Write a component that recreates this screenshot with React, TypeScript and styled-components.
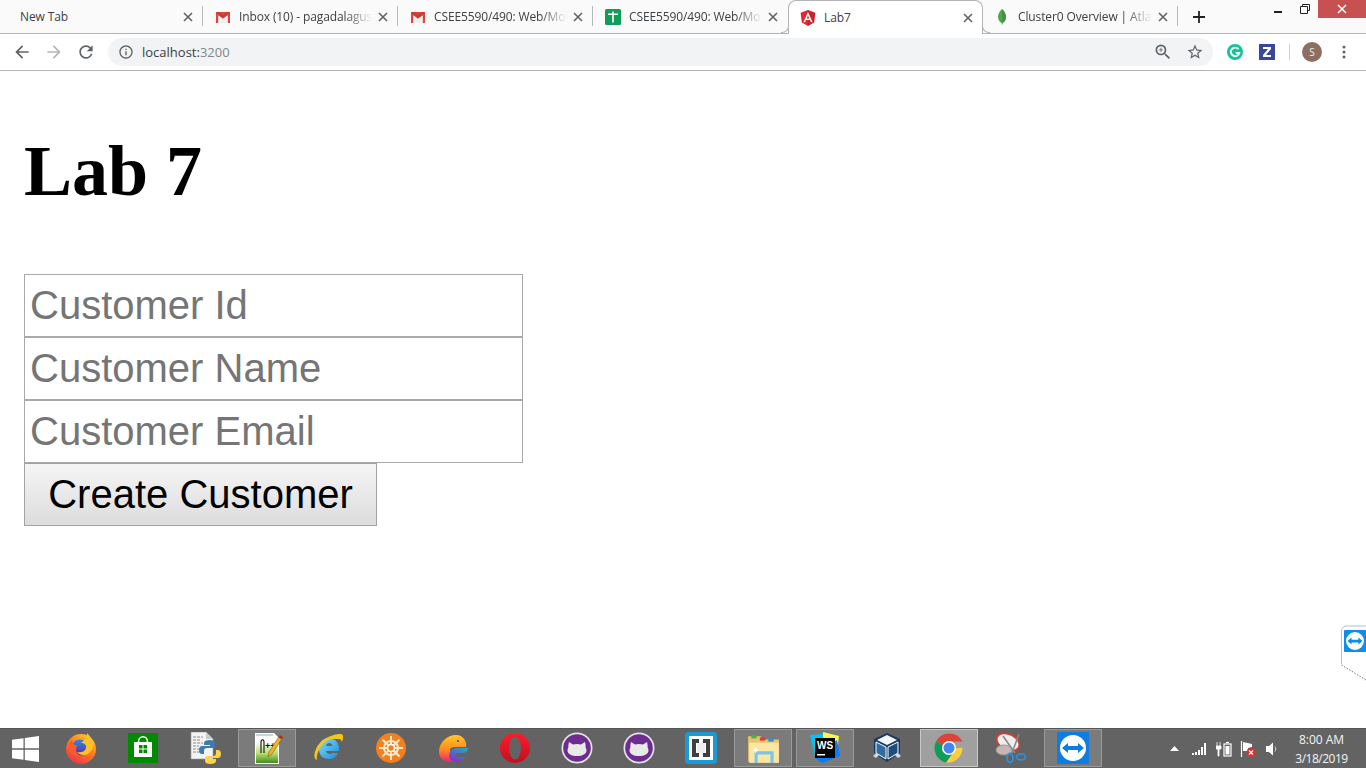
import React from 'react';
import styled, { createGlobalStyle } from 'styled-components';

const Global = createGlobalStyle`
  html, body { margin: 0; padding: 0; height: 100%; overflow: hidden; background: #fff; }
  * { box-sizing: border-box; }
`;

const Screen = styled.div`
  width: 1366px; height: 768px; display: flex; flex-direction: column; position: relative; overflow: hidden;
  font-family: "Open Sans", "Noto Sans", sans-serif;
`;
const TabStrip = styled.div`
  height: 34px; flex: none; display: flex; align-items: stretch; padding-left: 8px;
  background: #fafafa; border-bottom: 1px solid #b4b4b4;
`;
const Tab = styled.div<{ $active?: boolean; $afterActive?: boolean }>`
  width: ${p => (p.$active ? 195 : 194)}px; flex: none; display: flex; align-items: center; gap: 8px;
  padding: 0 9px 0 ${p => (p.$active || p.$afterActive ? 11 : 12)}px; position: relative;
  height: ${p => (p.$active ? 34 : 33)}px;
  background: ${p => (p.$active ? '#fff' : 'transparent')};
  ${p => p.$active ? `
    border: 1px solid #b4b4b4; border-bottom: 0; border-radius: 8px 8px 0 0;
    &::before, &::after { content: ''; position: absolute; bottom: 1px; width: 7px; height: 7px; background: #fafafa; border-bottom: 1px solid #b4b4b4; }
    &::before { left: -8px; border-right: 1px solid #b4b4b4; border-bottom-right-radius: 7px; }
    &::after { right: -8px; border-left: 1px solid #b4b4b4; border-bottom-left-radius: 7px; }
  ` : ''}
`;
const TabTitle = styled.span<{ $fade?: boolean }>`
  flex: 1; min-width: 0; white-space: nowrap; overflow: hidden; font-size: 12px; line-height: 16px;
  color: #3c4043; letter-spacing: -0.12px; margin-right: -2px;
  ${p => p.$fade ? `-webkit-mask-image: linear-gradient(to right, #000 80%, transparent 100%); mask-image: linear-gradient(to right, #000 80%, transparent 100%);` : ''}
`;
const TabClose = styled.svg`
  width: 10px; height: 10px; flex: none; stroke: #5f6368; stroke-width: 1.6; fill: none;
`;
const TabDivider = styled.div<{ $hidden?: boolean }>`
  width: 1px; flex: none; height: 20px; align-self: center; margin-top: -1px;
  background: ${p => (p.$hidden ? 'transparent' : '#b8b8b8')};
`;
const NewTab = styled.svg`
  width: 12px; height: 12px; flex: none; align-self: center; margin-left: 15px; stroke: #222; stroke-width: 1.8; fill: none;
`;
const WindowControls = styled.div`
  margin-left: auto; display: flex; align-items: flex-start; height: 18px;
`;
const WinButton = styled.div<{ $close?: boolean }>`
  width: ${p => (p.$close ? 48 : 26.5)}px; height: 18px; display: flex; align-items: center; justify-content: center;
  background: ${p => (p.$close ? '#c75050' : 'transparent')};
`;
const Toolbar = styled.div`
  height: 37px; flex: none; display: flex; align-items: center; padding: 0 6px; background: #fff;
  border-bottom: 1px solid #b4b4b4;
`;
const ToolButton = styled.div`
  width: 32px; height: 32px; flex: none; display: flex; align-items: center; justify-content: center;
`;
const Omnibox = styled.div`
  flex: 1; height: 28px; margin: 0 6px; background: #f1f3f4; border-radius: 14px; display: flex; align-items: center;
  padding: 0 2px 0 10px; font-size: 13px; min-width: 0;
`;
const UrlHost = styled.span`
  color: #3c4043; margin-left: 8px;
`;
const UrlPort = styled.span`
  color: #80868b; flex: 1;
`;
const ToolDivider = styled.div`
  width: 1px; height: 16px; background: #d0d0d0; margin: 0 6px;
`;
const Avatar = styled.div`
  width: 20px; height: 20px; border-radius: 50%; background: #8d6e63; color: #eee; font-size: 10px;
  display: flex; align-items: center; justify-content: center;
`;
const Page = styled.main`
  flex: 1; padding: 0 24px; min-height: 0;
`;
const Heading = styled.h1`
  margin: 60px 0 63px; font: bold 72px/80px "Liberation Serif", "Times New Roman", serif; color: #000;
`;
const Form = styled.form`
  display: flex; flex-direction: column; align-items: flex-start;
`;
const Field = styled.input`
  width: 499px; height: 63px; padding: 0 5px; border: 1px solid #a9a9a9; border-radius: 0; outline: none; background: #fff;
  font: 40px "Liberation Sans", Arial, sans-serif;
  &::placeholder { color: #757575; opacity: 1; }
`;
const Submit = styled.button`
  width: 353px; height: 63px; padding: 0; border: 1px solid #a3a3a3; border-radius: 0;
  background: linear-gradient(#f5f5f5, #dcdcdc); color: #000;
  font: 40px "Liberation Sans", Arial, sans-serif;
`;
const SideWidget = styled.svg`
  position: absolute; right: 0; top: 625px; width: 26px; height: 56px;
`;
const Taskbar = styled.footer`
  height: 40px; flex: none; display: flex; align-items: stretch; background: #636363; border-top: 1px solid #555;
  color: #fff;
`;
const StartButton = styled.div`
  width: 50px; flex: none; display: flex; align-items: center; justify-content: center;
`;
const TaskItem = styled.div<{ $state?: 'open' | 'focus' }>`
  width: 58px; margin: 0 2px 1px; flex: none; display: flex; align-items: center; justify-content: center;
  border: ${p => (p.$state ? '1px solid' : '0')};
  border-color: ${p => (p.$state === 'focus' ? '#c8c8c8' : '#9a9a9a')};
  background: ${p => (p.$state === 'focus' ? '#a0a0a0' : p.$state === 'open' ? '#7b7b7b' : 'transparent')};
`;
const Tray = styled.div`
  margin-left: auto; display: flex; align-items: center;
`;
const TrayIcon = styled.div<{ $gap?: number }>`
  width: 24px; display: flex; align-items: center; justify-content: center;
  margin-right: ${p => p.$gap ?? 0}px;
`;
const Clock = styled.div`
  width: 82px; padding-right: 7px; text-align: center; font-size: 12px; line-height: 19px; color: #f4f4f4;
`;
const ClockDate = styled.div`
  letter-spacing: -0.5px;
`;

const x = <TabClose viewBox="0 0 10 10"><path d="M1 1l8 8M9 1l-8 8" /></TabClose>;

const Gmail = () => (
  <svg width="16" height="16" viewBox="0 0 16 16">
    <path d="M1 3h14v11h-2.4V6.6L8 10 3.4 6.6V14H1z" fill="#d8453a" />
    <path d="M3.4 14V6.6L8 10l4.6-3.4V14z" fill="#efefef" />
    <path d="M1 3l7 5.4L15 3h-2L8 6.6 3 3z" fill="#c5392f" />
  </svg>
);
const Sheets = () => (
  <svg width="16" height="16" viewBox="0 0 16 16">
    <rect width="16" height="16" rx="1.5" fill="#0f9d58" />
    <path d="M7.200 2.500h1.600v2H13v1.600H8.800v7.400H7.200V6.100H3V4.500h4.200z" fill="#fff" />
  </svg>
);
const Angular = () => (
  <svg width="16" height="16" viewBox="0 0 16 16">
    <path d="M8 0L.6 2.7l1.2 9.7L8 16z" fill="#e0282f" />
    <path d="M8 0l7.4 2.7-1.2 9.7L8 16z" fill="#c4242b" />
    <path d="M8 2L3.4 12.3h1.7l.9-2.3h4l.9 2.3h1.7zm1.3 6.6H6.7L8 5.5z" fill="#fff" />
  </svg>
);
const Leaf = () => (
  <svg width="16" height="16" viewBox="0 0 16 16">
    <path d="M8 0c2 2 4 4.500 4 8s-2.500 5.500-3.500 6l-.5 2-.5-2C6.500 13.500 4 11.500 4 8s2-6 4-8z" fill="#4fa84a" />
    <path d="M8 0c2 2 4 4.500 4 8s-2.500 5.500-3.500 6L8 16z" fill="#3f9440" />
  </svg>
);

const M = ({ d, c = '#5f6368', s = 20 }: { d: string; c?: string; s?: number }) => (
  <svg width={s} height={s} viewBox="0 0 24 24" fill={c}><path d={d} /></svg>
);
const BACK = 'M20 11H7.83l5.59-5.59L12 4l-8 8 8 8 1.41-1.41L7.83 13H20v-2z';
const FWD = 'M4 13h12.17l-5.59 5.590L12 20l8-8-8-8-1.410 1.410L16.170 11H4v2z';
const RELOAD = 'M17.65 6.35A7.958 7.958 0 0 0 12 4c-4.42 0-7.99 3.58-7.99 8s3.57 8 7.99 8c3.73 0 6.84-2.55 7.73-6h-2.08A5.99 5.99 0 0 1 12 18c-3.31 0-6-2.69-6-6s2.69-6 6-6c1.66 0 3.14.69 4.22 1.78L13 11h7V4l-2.35 2.35z';
const INFO = 'M11 7h2v2h-2zm0 4h2v6h-2zm1-9C6.48 2 2 6.48 2 12s4.48 10 10 10 10-4.48 10-10S17.52 2 12 2zm0 18c-4.41 0-8-3.59-8-8s3.59-8 8-8 8 3.59 8 8-3.59 8-8 8z';
const STAR = 'M22 9.24l-7.19-.62L12 2 9.19 8.63 2 9.24l5.46 4.73L5.82 21 12 17.27 18.18 21l-1.63-7.03L22 9.24zM12 15.4l-3.76 2.27 1-4.28-3.32-2.88 4.38-.38L12 6.1l1.71 4.04 4.38.38-3.32 2.88 1 4.28L12 15.4z';
const ZOOM = 'M15.5 14h-.79l-.28-.27A6.471 6.471 0 0 0 16 9.5 6.5 6.5 0 1 0 9.5 16c1.61 0 3.09-.59 4.23-1.57l.27.28v.79l5 4.99L20.49 19l-4.99-5zm-6 0C7.01 14 5 11.99 5 9.5S7.01 5 9.5 5 14 7.01 14 9.5 11.99 14 9.5 14zM12 10h-2v2H9v-2H7V9h2V7h1v2h2v1z';

const Grammarly = () => (
  <svg width="16" height="16" viewBox="0 0 16 16">
    <circle cx="8" cy="8" r="8" fill="#15c39a" />
    <path d="M11.500 5.200A4.300 4.300 0 1 0 12.300 9H8.800" fill="none" stroke="#fff" strokeWidth="1.900" />
  </svg>
);
const ZExt = () => (
  <svg width="16" height="16" viewBox="0 0 16 16">
    <rect width="16" height="16" fill="#36479c" />
    <path d="M4 3h8v2l-5 6h5v2H4v-2l5-6H4z" fill="#fff" />
  </svg>
);
const Dots = () => (
  <svg width="4" height="14" viewBox="0 0 4 14" fill="#5f6368">
    <circle cx="2" cy="2" r="1.500" /><circle cx="2" cy="7" r="1.500" /><circle cx="2" cy="12" r="1.500" />
  </svg>
);

const Ico = ({ children, s = 32 }: { children: React.ReactNode; s?: number }) => (
  <svg width={s} height={s} viewBox="0 0 32 32">{children}</svg>
);

const WinLogo = () => (
  <svg width="27" height="26" viewBox="0 0 27 26" fill="#fff">
    <path d="M0 3.800L11.500 2.200V12.300H0zM12.800 2L27 0V12.300H12.800zM0 13.700H11.500V23.800L0 22.200zM12.800 13.700H27V26L12.800 24z" />
  </svg>
);
const Firefox = () => (
  <Ico>
    <defs>
      <linearGradient id="ff" x1="0.800" y1="0" x2="0.200" y2="1"><stop offset="0" stopColor="#ffcb2e" /><stop offset=".45" stopColor="#ff7a1f" /><stop offset="1" stopColor="#e8304f" /></linearGradient>
      <linearGradient id="ffc" x1="0.500" y1="0" x2="0.500" y2="1"><stop offset="0" stopColor="#2a8ae8" /><stop offset="1" stopColor="#5a2aa0" /></linearGradient>
    </defs>
    <circle cx="16" cy="17" r="15" fill="url(#ff)" />
    <circle cx="15" cy="15.500" r="8" fill="url(#ffc)" />
    <path d="M22 1c3 3 5 6 6 9 1 4-1 9-5 12-4 2-9 1-11-2 4 1 8 0 9-4 1-3-2-5-5-5 3-3 6-5 6-10z" fill="#ffc02a" />
    <path d="M7 8c1 4 2 6 6 5-3 3-3 9 3 11-6 1-11-3-12-8 0-3 1-6 3-8z" fill="#ff5a2a" />
  </Ico>
);
const Store = () => (
  <Ico>
    <rect x="1" y="1" width="30" height="30" fill="#008a00" />
    <path d="M7 10h18v15H7z" fill="#fff" />
    <path d="M11.500 10c0-7 9-7 9 0" fill="none" stroke="#fff" strokeWidth="1.600" />
    <path d="M12 13h3.500v3.500H12zM16.500 13H20v3.500h-3.500zM12 17.500h3.500V21H12zM16.500 17.500H20V21h-3.500z" fill="#008a00" />
  </Ico>
);
const PyDoc = () => (
  <Ico>
    <path d="M2 0h15l7 7v20H2z" fill="#f3f3f3" stroke="#999" strokeWidth=".6" />
    <path d="M17 0l7 7h-7z" fill="#c9c9c9" />
    <path d="M4 5h10M4 8h8M4 11h10M4 14h6M4 17h8M4 20h7" stroke="#8a8a8a" strokeWidth="1" strokeDasharray="3 1" />
    <path d="M21 8c-4 0-6 1-6 3v2h6v1h-8c-2 0-3 2-3 4s1 4 3 4h2v-3c0-2 1-3 3-3h5c2 0 3-1 3-3v-2c0-2-2-3-5-3z" fill="#3f7cac" />
    <path d="M21 32c4 0 6-1 6-3v-2h-6v-1h8c2 0 3-2 3-4s-1-4-3-4h-2v3c0 2-1 3-3 3h-5c-2 0-3 1-3 3v2c0 2 2 3 5 3z" fill="#ffd343" />
  </Ico>
);
const NotepadPP = () => (
  <Ico>
    <defs>
      <linearGradient id="np" x1="0" y1="0" x2="0" y2="1"><stop offset="0" stopColor="#ffffff" /><stop offset=".55" stopColor="#b6dc6a" /><stop offset="1" stopColor="#3f8f1f" /></linearGradient>
    </defs>
    <path d="M4 1h19l5 5v26H4z" fill="#fff" />
    <path d="M5 10h22v21H5z" fill="url(#np)" />
    <path d="M5 2h17v2H5z" fill="#9bc" opacity=".6" />
    <path d="M10 21V10c0-3 3-3 3 0v11" fill="none" stroke="#111" strokeWidth="1.100" />
    <text x="14" y="17" fontSize="9" fontFamily="Liberation Sans" fontWeight="bold" fill="#111">++</text>
    <path d="M29 3l3 2-11 17-4 3 1-5z" fill="#f0b429" stroke="#7a5a10" strokeWidth=".6" />
    <path d="M29 3l3 2-1.500 2.500-3-2z" fill="#a33" />
  </Ico>
);
const IE = () => (
  <Ico>
    <defs>
      <linearGradient id="ie" x1="0" y1="0" x2="1" y2="1"><stop offset="0" stopColor="#7fe0ff" /><stop offset="1" stopColor="#1c8ad6" /></linearGradient>
    </defs>
    <path d="M15.500 6C9 6 6 11 6 17c0 6.500 4 10 10 10 4 0 7.500-2 9-6h-6c-1 1.500-5 1.500-6-2h13v-2c0-7-4-11-10.500-11zM13 14c.5-4 6-4 6.500 0z" fill="url(#ie)" />
    <path d="M26 2c3-.5 4.500 1 4 3.500C29 10 20 4 12 10 6 15 3 24 4 28c-3-1-3.500-5-1-11C6 9 16 3 26 2z" fill="#f5c518" />
    <path d="M26 2c3 0 5.500 2 3 8-1-3-3-5-6-6z" fill="#f5c518" />
  </Ico>
);
const Wheel = () => (
  <Ico>
    <circle cx="16" cy="16" r="15" fill="#f47f1f" />
    <g stroke="#ffe9c9" strokeWidth="2" fill="none">
      <circle cx="16" cy="16" r="7" />
      <path d="M16 4v24M4 16h24M7.500 7.500l17 17M24.500 7.500l-17 17" />
    </g>
    <circle cx="16" cy="16" r="3.500" fill="#f47f1f" stroke="#fff" strokeWidth="1.600" />
  </Ico>
);
const Whale = () => (
  <Ico>
    <defs>
      <linearGradient id="wh" x1="0.500" y1="0" x2="0.500" y2="1"><stop offset="0" stopColor="#ffc72e" /><stop offset=".55" stopColor="#ff8a1f" /><stop offset="1" stopColor="#e8207e" /></linearGradient>
      <linearGradient id="wt" x1="0.800" y1="0" x2="0.200" y2="1"><stop offset="0" stopColor="#1fa6c9" /><stop offset="1" stopColor="#8a2ac0" /></linearGradient>
    </defs>
    <path d="M2 20C2 9 12 2 20 3c7 1 10 7 9 12H17c-4 0-5 4-3 6-2 3-1 6 3 9C8 31 2 27 2 20z" fill="url(#wh)" />
    <path d="M12 24c0-5 4-8 8-8h11c0 3-2 5-4 5h-6c-3 0-3 4 0 4h7c-2 4-6 6-9 5-4-1-7-3-7-6z" fill="url(#wt)" />
    <circle cx="21" cy="9" r="1" fill="#6a3a10" />
  </Ico>
);
const Opera = () => (
  <Ico>
    <defs>
      <linearGradient id="op" x1="0" y1="0" x2="0" y2="1"><stop offset="0" stopColor="#ff1b2d" /><stop offset="1" stopColor="#c1101f" /></linearGradient>
    </defs>
    <circle cx="16" cy="16" r="15" fill="url(#op)" />
    <ellipse cx="16" cy="16" rx="6" ry="11.500" fill="#636363" />
  </Ico>
);
const Cat = () => (
  <Ico>
    <circle cx="16" cy="16" r="15.500" fill="#e4e4e4" />
    <circle cx="16" cy="16" r="13.800" fill="#6e2b90" />
    <path d="M8 10l4 2.500c2.500-.7 5.500-.7 8 0L24 10c.5 2 .8 4 .6 5.500.6 1 .9 2 .9 3 0 3.500-4 5.500-9.500 5.500s-9.500-2-9.500-5.500c0-1 .3-2 .9-3C7.200 14 7.500 12 8 10z" fill="#e9e9e9" />
  </Ico>
);
const Brackets = () => (
  <Ico>
    <rect x="0" y="0" width="32" height="32" rx="4" fill="#1c9ad6" />
    <rect x="4" y="4" width="24" height="24" fill="#fff" />
    <path d="M7 7h7v4h-3v10h3v4H7zM25 7h-7v4h3v10h-3v4h7z" fill="#3f3f3f" />
    <rect x="12" y="11" width="8" height="10" fill="#efefef" />
  </Ico>
);
const Folder = () => (
  <Ico s={34}>
    <path d="M2 5h12l2 3h15v21H2z" fill="#e9c46a" />
    <path d="M5 4h5v3H5z" fill="#4caf50" /><path d="M13 6h5v3h-5z" fill="#e53935" /><path d="M21 7h5v3h-5z" fill="#2f8fe0" />
    <path d="M3 11h28v19H3z" fill="#fbe7a1" />
    <path d="M8 19h18v3H8zM8 22h3v8H8zM23 22h3v8h-3z" fill="#7fc4e8" />
    <path d="M9 15l1 2 2 1-2 1-1 2-1-2-2-1 2-1z" fill="#fff" />
  </Ico>
);
const WebStorm = () => (
  <Ico>
    <path d="M1 3l14-1 4 6-12 20z" fill="#07c3f2" />
    <path d="M14 0l16 4-2 18-14-14z" fill="#fcf84a" />
    <path d="M6 26L28 8l3 16-18 7z" fill="#087cfa" />
    <rect x="6" y="6" width="20" height="20" fill="#000" />
    <text x="8" y="17" fontSize="10" fontWeight="bold" fontFamily="Liberation Sans" fill="#fff">WS</text>
    <rect x="8" y="22" width="8" height="1.500" fill="#fff" />
  </Ico>
);
const VBox = () => (
  <Ico>
    <path d="M16 1l13 6v14l-13 9-13-9V7z" fill="#1b3a5f" />
    <path d="M16 3l10 5-10 5-10-5z" fill="#f4f7fa" />
    <path d="M5 10l10 5v12l-10-6z" fill="#2e6da4" stroke="#fff" strokeWidth="1" />
    <path d="M27 10l-10 5v12l10-6z" fill="#1f4d7e" stroke="#fff" strokeWidth="1" />
    <path d="M2 24l3-3 3 2-3 3zM30 24l-3-3-3 2 3 3z" fill="#cfd8e3" />
  </Ico>
);
const Chrome = () => (
  <Ico>
    <path d="M16 16L3 9.500A15 15 0 0 1 29.500 9.500H16z" fill="#db4437" />
    <path d="M16 16L3 9.500A15 15 0 0 0 13 30.700L20 21z" fill="#0f9d58" />
    <path d="M16 16h13.500A15 15 0 0 1 13 30.700L20 21z" fill="#ffcd40" />
    <circle cx="16" cy="16" r="7" fill="#fff" />
    <circle cx="16" cy="16" r="5.500" fill="#4285f4" />
  </Ico>
);
const Snip = () => (
  <Ico>
    <ellipse cx="13" cy="10" rx="12" ry="8" fill="#eee" stroke="#c9403a" strokeWidth="2" transform="rotate(25 13 10)" />
    <ellipse cx="9" cy="18" rx="8" ry="5" fill="#c5b5b5" stroke="#999" strokeWidth="1" />
    <path d="M8 4l12 17M24 2L17 21" stroke="#8a8a8a" strokeWidth="1.600" />
    <ellipse cx="15" cy="26" rx="3" ry="4.500" fill="none" stroke="#2f8fd8" strokeWidth="1.800" />
    <ellipse cx="26" cy="25" rx="4.500" ry="3" fill="none" stroke="#2f8fd8" strokeWidth="1.800" />
  </Ico>
);
const TeamViewerGlyph = ({ c = '#0e7ce0' }: { c?: string }) => (
  <g>
    <rect width="32" height="32" rx="1" fill={c} />
    <circle cx="16" cy="16" r="13" fill="#fff" />
    <path d="M5 16l6-5v3h10v-3l6 5-6 5v-3H11v3z" fill={c} />
  </g>
);
const TeamViewer = () => <Ico><TeamViewerGlyph /></Ico>;

const Caret = () => <svg width="9" height="5" viewBox="0 0 9 5" fill="#fff"><path d="M0 5l4.500-5L9 5z" /></svg>;
const Signal = () => (
  <svg width="16" height="12" viewBox="0 0 16 12" fill="#fff">
    <path d="M0 10h2v2H0zM3 9h2v3H3zM6 7h2v5H6zM9 4h2v8H9zM12 0h2v12h-2z" />
  </svg>
);
const Battery = () => (
  <svg width="16" height="16" viewBox="0 0 16 16" fill="none" stroke="#fff" strokeWidth="1.200">
    <rect x="8" y="3" width="7" height="12" /><path d="M10 1.500h3" /><rect x="9.500" y="5" width="4" height="8.500" fill="#fff" stroke="none" />
    <path d="M1 1v4M4 1v4M0 5h5v3H3v7H2V8H0z" fill="#fff" strokeWidth=".8" />
  </svg>
);
const FlagX = () => (
  <svg width="16" height="16" viewBox="0 0 16 16">
    <path d="M1.500 0v16" stroke="#fff" strokeWidth="1.200" />
    <path d="M3 1l9 2v3l-4 1v3H3z" fill="#fff" />
    <circle cx="11" cy="11.500" r="4.500" fill="#e0312f" />
    <path d="M9 9.500l4 4M13 9.500l-4 4" stroke="#fff" strokeWidth="1.200" />
  </svg>
);
const Speaker = () => (
  <svg width="14" height="14" viewBox="0 0 14 14" fill="#fff">
    <path d="M1 4h3l4-3.500v13L4 10H1z" />
    <path d="M10 4.500c1 1.500 1 3.500 0 5" stroke="#ddd" fill="none" strokeWidth="1" />
  </svg>
);

type Item = { key: string; icon: React.ReactNode; state?: 'open' | 'focus' };
const items: Item[] = [
  { key: 'firefox', icon: <Firefox /> },
  { key: 'store', icon: <Store /> },
  { key: 'python', icon: <PyDoc /> },
  { key: 'notepad', icon: <NotepadPP />, state: 'open' },
  { key: 'ie', icon: <IE /> },
  { key: 'wheel', icon: <Wheel /> },
  { key: 'whale', icon: <Whale /> },
  { key: 'opera', icon: <Opera /> },
  { key: 'cat1', icon: <Cat /> },
  { key: 'cat2', icon: <Cat /> },
  { key: 'brackets', icon: <Brackets /> },
  { key: 'folder', icon: <Folder />, state: 'open' },
  { key: 'ws', icon: <WebStorm />, state: 'open' },
  { key: 'vbox', icon: <VBox /> },
  { key: 'chrome', icon: <Chrome />, state: 'focus' },
  { key: 'snip', icon: <Snip /> },
  { key: 'tv', icon: <TeamViewer />, state: 'open' },
];

export default function App() {
  return (
    <Screen>
      <Global />
      <TabStrip>
        <Tab><TabTitle>New Tab</TabTitle>{x}</Tab>
        <TabDivider />
        <Tab><Gmail /><TabTitle $fade>Inbox (10) - pagadalagusrikar@gmail.com</TabTitle>{x}</Tab>
        <TabDivider />
        <Tab><Gmail /><TabTitle $fade>CSEE5590/490: Web/Mobile Programming</TabTitle>{x}</Tab>
        <TabDivider />
        <Tab><Sheets /><TabTitle $fade>CSEE5590/490: Web/Mobile Programming</TabTitle>{x}</Tab>
        <TabDivider $hidden />
        <Tab $active><Angular /><TabTitle>Lab7</TabTitle>{x}</Tab>
        <Tab $afterActive><Leaf /><TabTitle $fade>Cluster0 Overview | Atlas: MongoDB Atlas</TabTitle>{x}</Tab>
        <TabDivider />
        <NewTab viewBox="0 0 12 12"><path d="M6 0v12M0 6h12" /></NewTab>
        <WindowControls>
          <WinButton><svg width="10" height="10" viewBox="0 0 10 10"><path d="M1 7h8v2H1z" fill="#222" /></svg></WinButton>
          <WinButton><svg width="10" height="10" viewBox="0 0 10 10" fill="none" stroke="#222"><path d="M2.500 2.500V.5h7v6h-2" /><path d="M.5 2.500h7v7h-7z" /></svg></WinButton>
          <WinButton $close><svg width="10" height="10" viewBox="0 0 10 10" stroke="#fff" strokeWidth="1.500"><path d="M1 1l8 8M9 1l-8 8" /></svg></WinButton>
        </WindowControls>
      </TabStrip>
      <Toolbar>
        <ToolButton><M d={BACK} /></ToolButton>
        <ToolButton><M d={FWD} c="#b4b6b8" /></ToolButton>
        <ToolButton><M d={RELOAD} /></ToolButton>
        <Omnibox>
          <M d={INFO} s={16} />
          <UrlHost>localhost:</UrlHost><UrlPort>3200</UrlPort>
          <ToolButton><M d={ZOOM} s={20} /></ToolButton>
          <ToolButton><M d={STAR} s={18} /></ToolButton>
        </Omnibox>
        <ToolButton><Grammarly /></ToolButton>
        <ToolButton><ZExt /></ToolButton>
        <ToolDivider />
        <ToolButton><Avatar>S</Avatar></ToolButton>
        <ToolButton><Dots /></ToolButton>
      </Toolbar>
      <Page>
        <Heading>Lab 7</Heading>
        <Form onSubmit={e => e.preventDefault()}>
          <Field placeholder="Customer Id" />
          <Field placeholder="Customer Name" />
          <Field placeholder="Customer Email" />
          <Submit type="submit">Create Customer</Submit>
        </Form>
      </Page>
      <SideWidget viewBox="0 0 26 56">
        <path d="M26 1H4L1 4v37l25 15z" fill="#fff" />
        <path d="M26 1H5L1.500 4v35" fill="none" stroke="#bdbdbd" />
        <path d="M1.500 40L26 55" fill="none" stroke="#777" strokeDasharray="1.500 1.500" />
        <svg x="4" y="5" width="22" height="22" viewBox="0 0 32 32"><TeamViewerGlyph c="#0e8ee9" /></svg>
      </SideWidget>
      <Taskbar>
        <StartButton><WinLogo /></StartButton>
        {items.map(i => <TaskItem key={i.key} $state={i.state}>{i.icon}</TaskItem>)}
        <Tray>
          <TrayIcon $gap={2}><Caret /></TrayIcon>
          <TrayIcon><Signal /></TrayIcon>
          <TrayIcon><Battery /></TrayIcon>
          <TrayIcon><FlagX /></TrayIcon>
          <TrayIcon><Speaker /></TrayIcon>
          <Clock>8:00 AM<ClockDate>3/18/2019</ClockDate></Clock>
        </Tray>
      </Taskbar>
    </Screen>
  );
}
